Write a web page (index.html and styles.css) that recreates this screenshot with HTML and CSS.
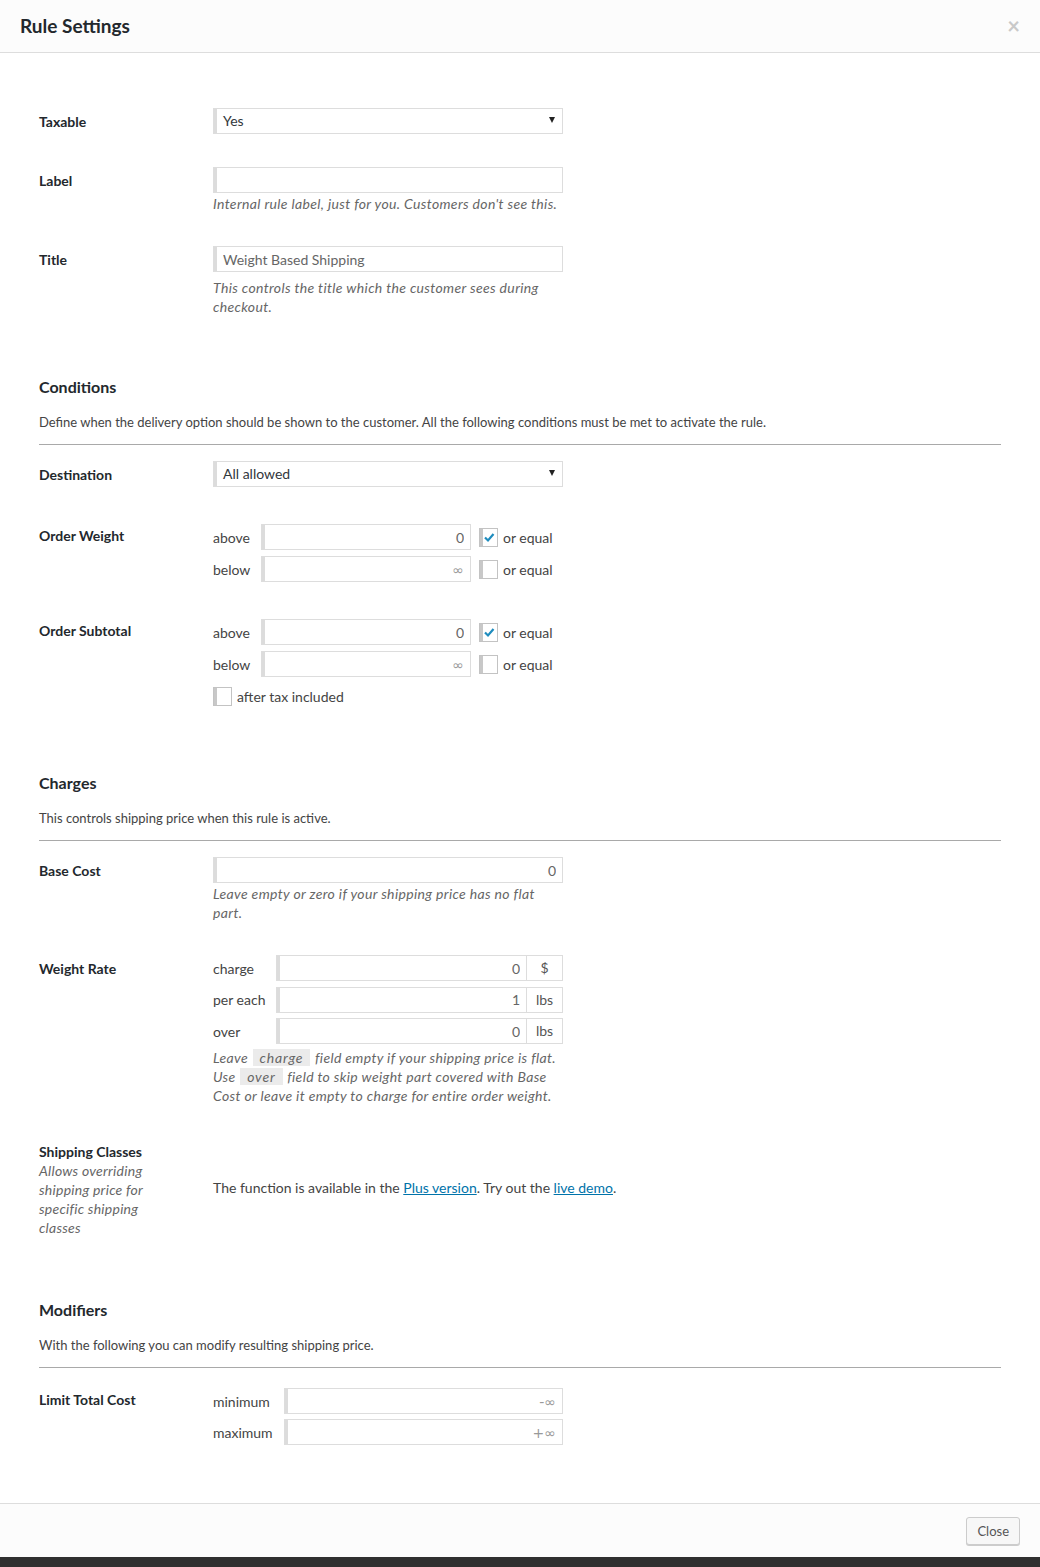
FILE: index.html
```html
<!DOCTYPE html>
<html>
<head>
<meta charset="utf-8">
<title>Rule Settings</title>
<link rel="stylesheet" href="styles.css">
</head>
<body>
<div class="modal">
  <header class="modal-header">
    <h1>Rule Settings</h1>
    <span class="close-x">×</span>
  </header>

  <div class="modal-body">
    <div class="row">
      <div class="row-label">Taxable</div>
      <div class="field"><div class="select"><span>Yes</span><span class="arrow"></span></div></div>
    </div>

    <div class="row">
      <div class="row-label">Label</div>
      <div class="field">
        <input class="input" type="text" value="">
        <div class="desc">Internal rule label, just for you. Customers don't see this.</div>
      </div>
    </div>

    <div class="row">
      <div class="row-label">Title</div>
      <div class="field">
        <input class="input muted" type="text" value="Weight Based Shipping">
        <div class="desc desc-title">This controls the title which the customer sees during checkout.</div>
      </div>
    </div>

    <section class="section">
      <h2>Conditions</h2>
      <p>Define when the delivery option should be shown to the customer. All the following conditions must be met to activate the rule.</p>
      <hr>
    </section>

    <div class="row">
      <div class="row-label">Destination</div>
      <div class="field"><div class="select"><span>All allowed</span><span class="arrow"></span></div></div>
    </div>

    <div class="row row-range">
      <div class="row-label">Order Weight</div>
      <div class="field">
        <div class="range">
          <span class="rl">above</span>
          <input class="input num" type="text" value="0">
          <label class="eq"><span class="cb checked"><svg viewBox="0 0 17 17" width="17" height="17"><polyline points="5,8.5 8,11.5 13.5,5" fill="none" stroke="#1e8cbe" stroke-width="2.2"/></svg></span>or equal</label>
          <span class="rl">below</span>
          <input class="input num" type="text" placeholder="∞">
          <label class="eq"><span class="cb"></span>or equal</label>
        </div>
      </div>
    </div>

    <div class="row row-range row-subtotal">
      <div class="row-label">Order Subtotal</div>
      <div class="field">
        <div class="range">
          <span class="rl">above</span>
          <input class="input num" type="text" value="0">
          <label class="eq"><span class="cb checked"><svg viewBox="0 0 17 17" width="17" height="17"><polyline points="5,8.5 8,11.5 13.5,5" fill="none" stroke="#1e8cbe" stroke-width="2.2"/></svg></span>or equal</label>
          <span class="rl">below</span>
          <input class="input num" type="text" placeholder="∞">
          <label class="eq"><span class="cb"></span>or equal</label>
        </div>
        <label class="after-tax"><span class="cb"></span>after tax included</label>
      </div>
    </div>

    <section class="section">
      <h2>Charges</h2>
      <p>This controls shipping price when this rule is active.</p>
      <hr>
    </section>

    <div class="row">
      <div class="row-label">Base Cost</div>
      <div class="field">
        <input class="input num" type="text" value="0">
        <div class="desc">Leave empty or zero if your shipping price has no flat part.</div>
      </div>
    </div>

    <div class="row">
      <div class="row-label">Weight Rate</div>
      <div class="field">
        <div class="range range-addon">
          <span class="rl">charge</span>
          <input class="input num" type="text" value="0">
          <span class="addon">$</span>
          <span class="rl">per each</span>
          <input class="input num" type="text" value="1">
          <span class="addon">lbs</span>
          <span class="rl">over</span>
          <input class="input num" type="text" value="0">
          <span class="addon">lbs</span>
        </div>
        <div class="desc desc-rate">Leave <code>charge</code> field empty if your shipping price is flat. Use <code>over</code> field to skip weight part covered with Base Cost or leave it empty to charge for entire order weight.</div>
      </div>
    </div>

    <div class="row row-classes">
      <div class="row-label">Shipping Classes
        <div class="label-desc">Allows overriding shipping price for specific shipping classes</div>
      </div>
      <div class="field field-wide">
        <span class="plain">The function is available in the <a href="#">Plus version</a>. Try out the <a href="#">live demo</a>.</span>
      </div>
    </div>

    <section class="section">
      <h2>Modifiers</h2>
      <p>With the following you can modify resulting shipping price.</p>
      <hr>
    </section>

    <div class="row row-range">
      <div class="row-label">Limit Total Cost</div>
      <div class="field">
        <div class="range range-limit">
          <span class="rl">minimum</span>
          <input class="input num" type="text" placeholder="-∞">
          <span class="rl">maximum</span>
          <input class="input num" type="text" placeholder="+∞">
        </div>
      </div>
    </div>
  </div>

  <footer class="modal-footer">
    <button class="btn" type="button">Close</button>
  </footer>
</div>
</body>
</html>
```
FILE: styles.css
```css
* { box-sizing: border-box; }
html, body { margin: 0; padding: 0; }
body {
  background: #303030;
  font-family: Lato, "Open Sans", sans-serif;
  font-size: 13px;
  color: #444;
  line-height: 19px;
}
.modal {
  width: 1040px;
  background: #fff;
  box-shadow: 0 3px 8px rgba(0, 0, 0, 0.6);
}
.modal-header {
  height: 53px;
  background: #fcfcfc;
  border-bottom: 1px solid #ddd;
  display: flex;
  align-items: center;
  justify-content: space-between;
  padding: 0 20px 2px;
}
.modal-header h1 {
  margin: 0;
  font-size: 19px;
  font-weight: 700;
  color: #23282d;
}
.close-x {
  color: #c9c9c9;
  font-size: 22px;
  font-weight: 700;
}
.modal-body {
  padding: 39px 39px 41px;
}
.row {
  display: grid;
  grid-template-columns: 174px 1fr;
  padding: 16px 0 17px;
}
.field { width: 350px; font-size: 14px; }
.field-wide { width: auto; align-self: center; }
.row-range { padding-top: 20px; }
.row-subtotal { padding-bottom: 23px; }
.row-classes { padding-bottom: 19px; }
.row-label {
  font-size: 14px;
  font-weight: 700;
  color: #23282d;
  line-height: 19px;
  padding-top: 4px;
  padding-right: 14px;
}
.row-range .row-label { padding-top: 2px; }
.label-desc {
  font-weight: 400;
  font-style: italic;
  color: #666;
  letter-spacing: 0.25px;
  max-width: 118px;
}
.input, .select {
  display: block;
  width: 100%;
  height: 26px;
  margin: 0;
  border: 1px solid #ddd;
  box-shadow: inset 3px 0 0 #dcdcdc;
  background: #fff;
  padding: 0 7px 0 9px;
  font: inherit;
  font-size: 14px;
  color: #32373c;
  line-height: 24px;
  outline: none;
  border-radius: 0;
}
.select {
  display: flex;
  justify-content: space-between;
  align-items: center;
}
.arrow {
  width: 0;
  height: 0;
  border-left: 3.5px solid transparent;
  border-right: 3.5px solid transparent;
  border-top: 6px solid #222;
  margin-top: -2px;
}
.muted { color: #666; }
.num { text-align: right; color: #666; padding-right: 6px; }
.num::placeholder {
  color: #999;
  opacity: 1;
  font-family: "DejaVu Sans", sans-serif;
  font-size: 14px;
}
.desc {
  font-style: italic;
  color: #666;
  line-height: 19px;
  margin-top: 1px;
  letter-spacing: 0.35px;
}
.desc-title { margin-top: 6px; }
.desc-rate { margin-top: 4px; }
code {
  display: inline-block;
  font-family: inherit;
  font-style: italic;
  background: #ebebeb;
  padding: 0 7px;
  line-height: 17px;
  letter-spacing: 0.8px;
  margin: 0 1px;
}
.section { margin-top: 44px; }
.section h2 {
  margin: 0;
  font-size: 16px;
  font-weight: 700;
  line-height: 20px;
  color: #23282d;
}
.section p {
  margin: 16px 0 0;
  line-height: 19px;
  color: #444;
}
.section hr {
  border: 0;
  border-top: 1px solid #a9a9a9;
  margin: 12px 0 0;
  height: 0;
}
.range {
  display: grid;
  grid-template-columns: auto 1fr 92px;
  row-gap: 6px;
  align-items: center;
}
.range-addon { grid-template-columns: auto 1fr 36px; row-gap: 5.5px; }
.range-limit { grid-template-columns: auto 1fr; row-gap: 5px; }
.rl { padding-right: 11px; color: #444; }
.eq {
  display: flex;
  align-items: center;
  gap: 5px;
  padding-left: 8px;
  color: #444;
}
.cb {
  display: inline-flex;
  align-items: center;
  justify-content: center;
  width: 19px;
  height: 19px;
  border: 1px solid #c3c3c3;
  box-shadow: inset 3px 0 0 #c8c8c8;
  background: #fff;
  flex: none;
}
.after-tax {
  display: flex;
  align-items: center;
  gap: 5px;
  margin-top: 10px;
  color: #444;
}
.addon {
  height: 26px;
  border: 1px solid #ddd;
  border-left: 0;
  text-align: center;
  line-height: 24px;
  color: #555;
}
a { color: #0073aa; text-decoration: underline; }
.plain { color: #444; }
.modal-footer {
  height: 54px;
  background: #fcfcfc;
  border-top: 1px solid #ddd;
  display: flex;
  justify-content: flex-end;
  padding: 13px 20px 12px;
}
.btn {
  height: 28px;
  padding: 0 10px;
  border: 1px solid #ccc;
  border-radius: 3px;
  background: #f7f7f7;
  box-shadow: 0 1px 0 #ccc;
  font: inherit;
  color: #555;
}
```
